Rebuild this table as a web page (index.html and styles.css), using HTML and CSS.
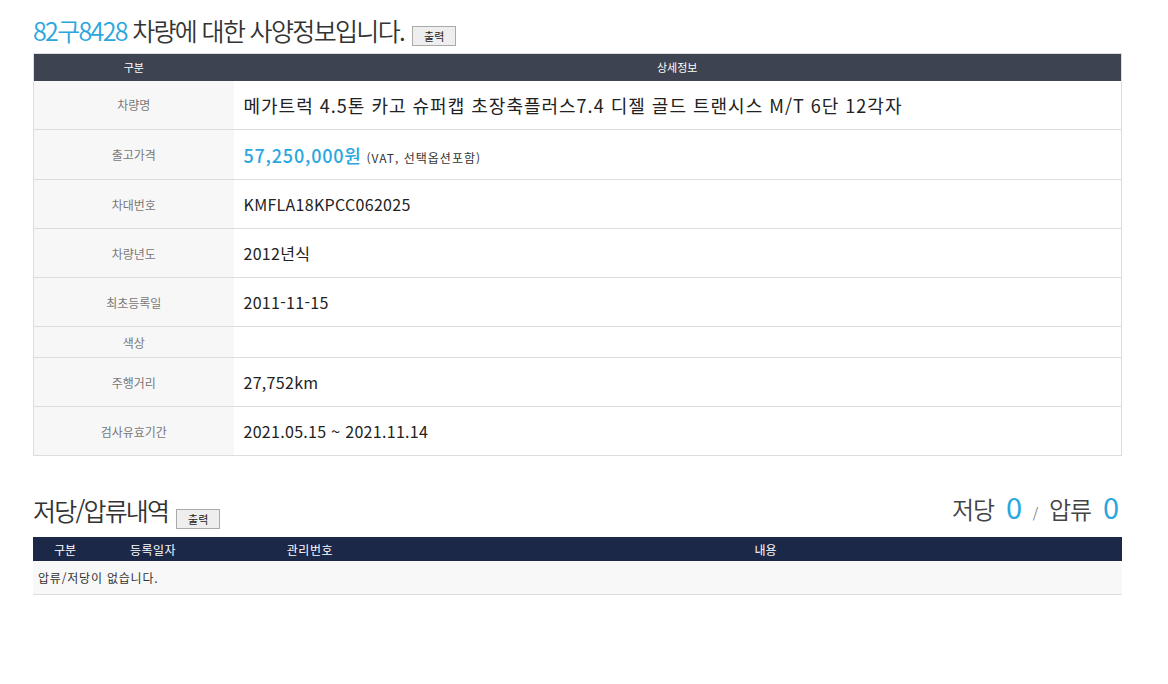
FILE: index.html
```html
<!DOCTYPE html>
<html lang="ko">
<head>
<meta charset="utf-8">
<link rel="stylesheet" href="styles.css">
</head>
<body>
<div class="page">
  <div class="title-row">
    <h1 class="title"><span class="plate">82구8428</span> 차량에 대한 사양정보입니다.</h1>
    <button class="btn">출력</button>
  </div>
  <table class="spec">
    <thead>
      <tr><th class="c1">구분</th><th>상세정보</th></tr>
    </thead>
    <tbody>
      <tr><td class="lbl">차량명</td><td class="val big">메가트럭 4.5톤 카고 슈퍼캡 초장축플러스7.4 디젤 골드 트랜시스 M/T 6단 12각자</td></tr>
      <tr class="tall"><td class="lbl">출고가격</td><td class="val"><span class="price">57,250,000원</span> <span class="note">(VAT, 선택옵션포함)</span></td></tr>
      <tr><td class="lbl">차대번호</td><td class="val">KMFLA18KPCC062025</td></tr>
      <tr><td class="lbl">차량년도</td><td class="val">2012년식</td></tr>
      <tr><td class="lbl">최초등록일</td><td class="val">2011-11-15</td></tr>
      <tr class="short"><td class="lbl">색상</td><td class="val"></td></tr>
      <tr><td class="lbl">주행거리</td><td class="val">27,752km</td></tr>
      <tr><td class="lbl">검사유효기간</td><td class="val">2021.05.15 ~ 2021.11.14</td></tr>
    </tbody>
  </table>

  <div class="sec-head">
    <div class="title-row2">
      <h2 class="title2">저당/압류내역</h2>
      <button class="btn">출력</button>
    </div>
    <div class="counts">저당 <span class="num">0</span> <span class="slash">/</span> 압류 <span class="num">0</span></div>
  </div>
  <table class="lien">
    <thead>
      <tr><th class="l1">구분</th><th class="l2">등록일자</th><th class="l3">관리번호</th><th class="l4">내용</th></tr>
    </thead>
    <tbody>
      <tr><td colspan="4" class="empty">압류/저당이 없습니다.</td></tr>
    </tbody>
  </table>
</div>
</body>
</html>
```

FILE: styles.css
```css
* { box-sizing: border-box; }
html, body { margin: 0; padding: 0; background: #fff; }
body {
  font-family: "Noto Sans CJK KR", "Noto Sans", sans-serif;
  color: #333;
}
.page {
  width: 1089px;
  margin-left: 33px;
  padding-top: 12px;
}
.title-row {
  display: flex;
  align-items: flex-end;
  height: 41px;
  padding-bottom: 7px;
}
.title {
  margin: 0;
  font-size: 25px;
  font-weight: 350;
  letter-spacing: -1.65px;
  line-height: 32px;
  color: #333;
}
.plate { color: #2ba6dc; }
.btn {
  font-family: "Noto Sans CJK KR", sans-serif;
  font-size: 11px;
  line-height: 14px;
  color: #222;
  background: #eeeeee;
  border: 1px solid #aaa;
  height: 20px;
  width: 44px;
  padding: 0;
  margin-left: 8px;
  margin-bottom: 0;
}
table { border-collapse: collapse; width: 100%; }
.spec { border: 1px solid #ddd; }
.spec th {
  background: #3d4350;
  color: #fff;
  font-weight: 400;
  font-size: 11px;
  height: 27px;
  padding: 0;
  text-align: center;
}
.spec th.c1 { width: 200px; }
.spec td { border-bottom: 1px solid #ddd; height: 49px; padding: 0; }
.spec tr.tall td { height: 50px; }
.spec tr.short td { height: 31px; }
.lbl {
  background: #f7f7f7;
  color: #777;
  font-size: 12px;
  text-align: center;
}
.val {
  padding-left: 10px !important;
  font-size: 16px;
  color: #222;
  letter-spacing: 0.3px;
}
.val.big { font-size: 18px; color: #222; letter-spacing: 1px; }
.price { color: #2aa7de; font-size: 18px; font-weight: 500; letter-spacing: 0.8px; }
.note { font-size: 12px; color: #333; letter-spacing: 1px; }

.sec-head {
  margin-top: 35px;
  display: flex;
  justify-content: space-between;
  align-items: flex-end;
  height: 46px;
  padding-bottom: 9px;
}
.title-row2 { display: flex; align-items: flex-end; }
.title2 {
  margin: 0;
  font-size: 25px;
  font-weight: 350;
  letter-spacing: -1.8px;
  line-height: 30px;
  color: #333;
  position: relative;
  top: -3px;
}
.title-row2 .btn { margin-bottom: -1px; margin-left: 8px; }
.counts {
  font-size: 24px;
  font-weight: 350;
  color: #444;
  letter-spacing: -1px;
  padding-right: 4px;
  line-height: 30px;
}
.counts .num { color: #2aa7de; font-size: 29px; margin-left: 6px; font-weight: 400; }
.counts .slash { font-size: 14px; color: #777; margin: 0 6px; }

.lien th {
  background: #1b2848;
  color: #fff;
  font-weight: 400;
  font-size: 12px;
  height: 24px;
  padding: 0;
  text-align: center;
}
.lien th.l1 { width: 64px; }
.lien th.l2 { width: 115px; text-align: left; padding-left: 33px; letter-spacing: 0.5px; }
.lien th.l3 { width: 195px; text-align: right; padding-right: 74px; letter-spacing: 0.5px; }
.lien th.l4 { text-align: center; padding-right: 0; padding-left: 2px; }
.lien td.empty {
  background: #f8f8f8;
  border-bottom: 1px solid #ddd;
  height: 33px;
  font-size: 12px;
  color: #333;
  padding-left: 5px;
  letter-spacing: 0.8px;
}
```
